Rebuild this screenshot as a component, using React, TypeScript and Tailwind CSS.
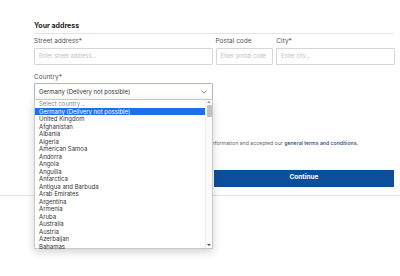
import React from 'react';

const countries = [
  'United Kingdom',
  'Afghanistan',
  'Albania',
  'Algeria',
  'American Samoa',
  'Andorra',
  'Angola',
  'Anguilla',
  'Antarctica',
  'Antigua and Barbuda',
  'Arab Emirates',
  'Argentina',
  'Armenia',
  'Aruba',
  'Australia',
  'Austria',
  'Azerbaijan',
  'Bahamas',
];

const Field = ({ label, placeholder, width }: { label: string; placeholder: string; width: string }) => (
  <div className={`flex flex-col ${width}`}>
    <label className="text-[6.5px] leading-[9px] text-[#555]">{label}</label>
    <div className="mt-[2px] h-[17px] border border-[#d6d6d6] rounded-[1px] flex items-center px-[4px] text-[5.5px] text-[#c2c2c2]">
      {placeholder}
    </div>
  </div>
);

export default function App() {
  return (
    <div className="relative w-[400px] h-[276px] bg-white font-['Inter',sans-serif] overflow-hidden">
      <div className="pl-[34px] pt-[21px] w-[395px]">
        <h2 className="text-[7px] leading-[10px] font-bold text-[#222]">Your address</h2>
        <div className="mt-[2px] h-px bg-[#e3e3e3] w-[360px]" />

        <div className="mt-[3px] flex gap-[3px]">
          <Field label="Street address*" placeholder="Enter street address..." width="w-[179px]" />
          <Field label="Postal code" placeholder="Enter postal code" width="w-[58px]" />
          <Field label="City*" placeholder="Enter city..." width="w-[119px]" />
        </div>

        <div className="mt-[8px] flex flex-col w-[179px]">
          <label className="text-[6.5px] leading-[9px] text-[#555]">Country*</label>
          <div className="mt-[1px] h-[17px] border border-[#a9b8d0] rounded-[1px] flex items-center justify-between px-[4px] text-[6px] text-[#333]">
            <span>Germany (Delivery not possible)</span>
            <svg width="6" height="4" viewBox="0 0 6 4" className="mr-[1px]">
              <path d="M0.5 0.8 L3 3.2 L5.5 0.8" fill="none" stroke="#666" strokeWidth="0.8" />
            </svg>
          </div>
        </div>

        <div className="mt-[40px] flex items-center gap-[4px] text-[5.2px] text-[#666]">
          <span className="w-[7px] h-[7px] border border-[#ccc] rounded-[1px]" />
          <span>
            I confirm that I am at least 18 years old, that I have read the privacy information and accepted our{' '}
            <span className="text-[#1f3f7a] font-medium">general terms and conditions.</span>
          </span>
        </div>

        <div className="mt-[22px] flex justify-end w-[360px]">
          <button className="w-[180px] h-[17px] bg-[#0b4f9c] text-white text-[6.5px] font-bold">Continue</button>
        </div>
      </div>

      <div className="absolute left-0 top-[195px] w-full h-px bg-[#e3e3e3]" />

      {/* open native select list */}
      <div className="absolute left-[34px] top-[99px] w-[179px] h-[150px] bg-white border border-[#c9c9c9] shadow-[0_3px_8px_rgba(0,0,0,0.18)] flex text-[6px] leading-[7.5px] text-[#333]">
        <div className="flex-1 flex flex-col">
          <div className="pl-[4px] text-[#888]">Select country...</div>
          <div className="pl-[4px] bg-[#1e6ff0] text-white">Germany (Delivery not possible)</div>
          {countries.map((c) => (
            <div key={c} className="pl-[4px]">{c}</div>
          ))}
        </div>
        <div className="w-[7px] flex flex-col items-center bg-[#fafafa] border-l border-[#eee]">
          <div className="mt-[1px] w-0 h-0 border-l-[2px] border-r-[2px] border-b-[2px] border-l-transparent border-r-transparent border-b-[#999]" />
          <div className="mt-[2px] w-[5px] h-[12px] bg-[#c1c1c1] rounded-[1px]" />
          <div className="flex-1" />
          <div className="mb-[2px] w-0 h-0 border-l-[2px] border-r-[2px] border-t-[2px] border-l-transparent border-r-transparent border-t-[#555]" />
        </div>
      </div>
    </div>
  );
}
